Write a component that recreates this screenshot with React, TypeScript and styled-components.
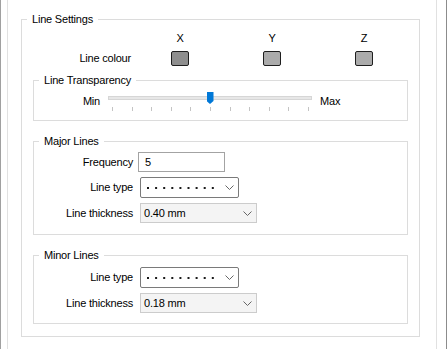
import React from 'react';
import styled, { createGlobalStyle } from 'styled-components';

const GlobalStyle = createGlobalStyle`
  html, body {
    margin: 0;
    padding: 0;
    background: #ffffff;
  }
  body {
    font-family: 'Liberation Sans', Arial, sans-serif;
    font-size: 11px;
    letter-spacing: -0.2px;
    color: #000000;
  }
`;

const axes = [
  { name: 'X', fill: '#8e8e8e' },
  { name: 'Y', fill: '#ababab' },
  { name: 'Z', fill: '#ababab' },
];

const DottedLine = () => (
  <svg width="70" height="2" viewBox="0 0 70 2">
    {Array.from({ length: 9 }).map((_, i) => (
      <rect key={i} x={i * 8.1} y={0} width={2} height={2} fill="#1a1a1a" />
    ))}
  </svg>
);

const Chevron = () => (
  <svg width="9" height="5" viewBox="0 0 9 5">
    <polyline points="0.5,0.5 4.5,4.5 8.5,0.5" fill="none" stroke="#666666" strokeWidth="1" />
  </svg>
);

const TransparencySlider = ({ value, max }: { value: number; max: number }) => {
  const pct = value / max;
  return (
    <Slider>
      <Track />
      <Thumb style={{ left: `calc(4px + ${pct} * (100% - 9px) - 3px)` }} />
      <Ticks>
        {Array.from({ length: max + 1 }).map((_, i) => (
          <Tick key={i} />
        ))}
      </Ticks>
    </Slider>
  );
};

export default function App() {
  return (
    <>
      <GlobalStyle />
      <Frame>
        <Panel>
          <Group>
            <Legend>Line Settings</Legend>
            <ColourGrid>
              <span />
              {axes.map((a) => (
                <AxisHead key={a.name}>{a.name}</AxisHead>
              ))}
              <ColourLabel>Line colour</ColourLabel>
              {axes.map((a) => (
                <Swatch key={a.name} $fill={a.fill} />
              ))}
            </ColourGrid>

            <SubGroup $top={7} $pt={3} $pb={9}>
              <Legend>Line Transparency</Legend>
              <SliderRow>
                <SliderLabel $align="right">Min</SliderLabel>
                <TransparencySlider value={5} max={10} />
                <SliderLabel $align="left">Max</SliderLabel>
              </SliderRow>
            </SubGroup>

            <SubGroup $top={13} $pt={3} $pb={11}>
              <Legend>Major Lines</Legend>
              <FormGrid>
                <FieldLabel>Frequency</FieldLabel>
                <TextInput>5</TextInput>
                <FieldLabel>Line type</FieldLabel>
                <Combo $width={99} $height={21} $active>
                  <DottedLine />
                  <Chevron />
                </Combo>
                <FieldLabel>Line thickness</FieldLabel>
                <Combo $width={117} $height={20}>
                  <span>0.40 mm</span>
                  <Chevron />
                </Combo>
              </FormGrid>
            </SubGroup>

            <SubGroup $top={13} $pt={4} $pb={10}>
              <Legend>Minor Lines</Legend>
              <FormGrid>
                <FieldLabel>Line type</FieldLabel>
                <Combo $width={99} $height={21} $active>
                  <DottedLine />
                  <Chevron />
                </Combo>
                <FieldLabel>Line thickness</FieldLabel>
                <Combo $width={117} $height={20}>
                  <span>0.18 mm</span>
                  <Chevron />
                </Combo>
              </FormGrid>
            </SubGroup>
          </Group>
        </Panel>
      </Frame>
    </>
  );
}

const Frame = styled.div`
  width: 447px;
  height: 349px;
  box-sizing: border-box;
  border-left: 1px solid #a0a0a0;
  border-right: 1px solid #8c8c8c;
  padding: 0 9px 0 6px;
  overflow: hidden;
`;

const Panel = styled.div`
  height: 100%;
  box-sizing: border-box;
  border-left: 1px solid #e1e1e1;
  border-right: 1px solid #e1e1e1;
  padding: 12px 16px 0 13px;
`;

const Group = styled.fieldset`
  margin: 0;
  padding: 4px 0 12px 0;
  min-inline-size: 0;
  width: 399px;
  box-sizing: border-box;
  border: 1px solid #dcdcdc;
`;

const SubGroup = styled.fieldset<{ $top: number; $pt: number; $pb: number }>`
  margin: ${({ $top }) => $top}px 11px 0 11px;
  padding: ${({ $pt }) => $pt}px 0 ${({ $pb }) => $pb}px 0;
  min-inline-size: 0;
  border: 1px solid #dcdcdc;
`;

const Legend = styled.legend`
  margin-left: 5px;
  padding: 0 5px;
  line-height: 15px;
`;

const ColourGrid = styled.div`
  display: grid;
  grid-template-columns: 112px repeat(3, 92px);
  grid-template-rows: 15px 15px;
  row-gap: 5px;
  align-items: center;
  line-height: 15px;
`;

const AxisHead = styled.span`
  justify-self: center;
`;

const ColourLabel = styled.span`
  text-align: right;
  padding-right: 3px;
`;

const Swatch = styled.div<{ $fill: string }>`
  justify-self: center;
  width: 18px;
  height: 15px;
  box-sizing: border-box;
  border: 1px solid #1e1e1e;
  border-radius: 2px;
  background: ${({ $fill }) => $fill};
`;

const SliderRow = styled.div`
  display: grid;
  grid-template-columns: 66px 204px auto;
  column-gap: 8px;
  align-items: start;
`;

const SliderLabel = styled.span<{ $align: 'left' | 'right' }>`
  text-align: ${({ $align }) => $align};
  line-height: 15px;
  margin-top: 3px;
`;

const Slider = styled.div`
  position: relative;
  height: 20px;
`;

const Track = styled.div`
  margin-top: 5px;
  height: 4px;
  box-sizing: border-box;
  border: 1px solid #d6d6d6;
  background: #e7e7e7;
`;

const Thumb = styled.div`
  position: absolute;
  top: 1px;
  width: 7px;
  height: 12px;
  background: #0078d7;
  clip-path: polygon(0 0, 100% 0, 100% 75%, 50% 100%, 0 75%);
`;

const Ticks = styled.div`
  display: flex;
  justify-content: space-between;
  margin-top: 7px;
  padding: 0 3px 0 4px;
`;

const Tick = styled.span`
  width: 1px;
  height: 4px;
  background: #c4c4c4;
`;

const FormGrid = styled.div`
  display: grid;
  grid-template-columns: 99px auto;
  column-gap: 5px;
  row-gap: 5px;
  align-items: center;
  justify-items: start;
  line-height: 15px;
`;

const FieldLabel = styled.span`
  justify-self: end;
`;

const TextInput = styled.div`
  width: 87px;
  height: 20px;
  box-sizing: border-box;
  border: 1px solid #a3a3a3;
  padding: 0 6px;
  display: flex;
  align-items: center;
`;

const Combo = styled.div<{ $width: number; $height: number; $active?: boolean }>`
  margin-left: 2px;
  width: ${({ $width }) => $width}px;
  height: ${({ $height }) => $height}px;
  box-sizing: border-box;
  border: 1px solid ${({ $active }) => ($active ? '#7a7a7a' : '#cccccc')};
  background: ${({ $active }) => ($active ? '#ffffff' : '#f4f4f4')};
  border-radius: ${({ $active }) => ($active ? '2px' : '0')};
  padding: 0 4px 0 ${({ $active }) => ($active ? '6px' : '3px')};
  display: flex;
  align-items: center;
  justify-content: space-between;
`;
